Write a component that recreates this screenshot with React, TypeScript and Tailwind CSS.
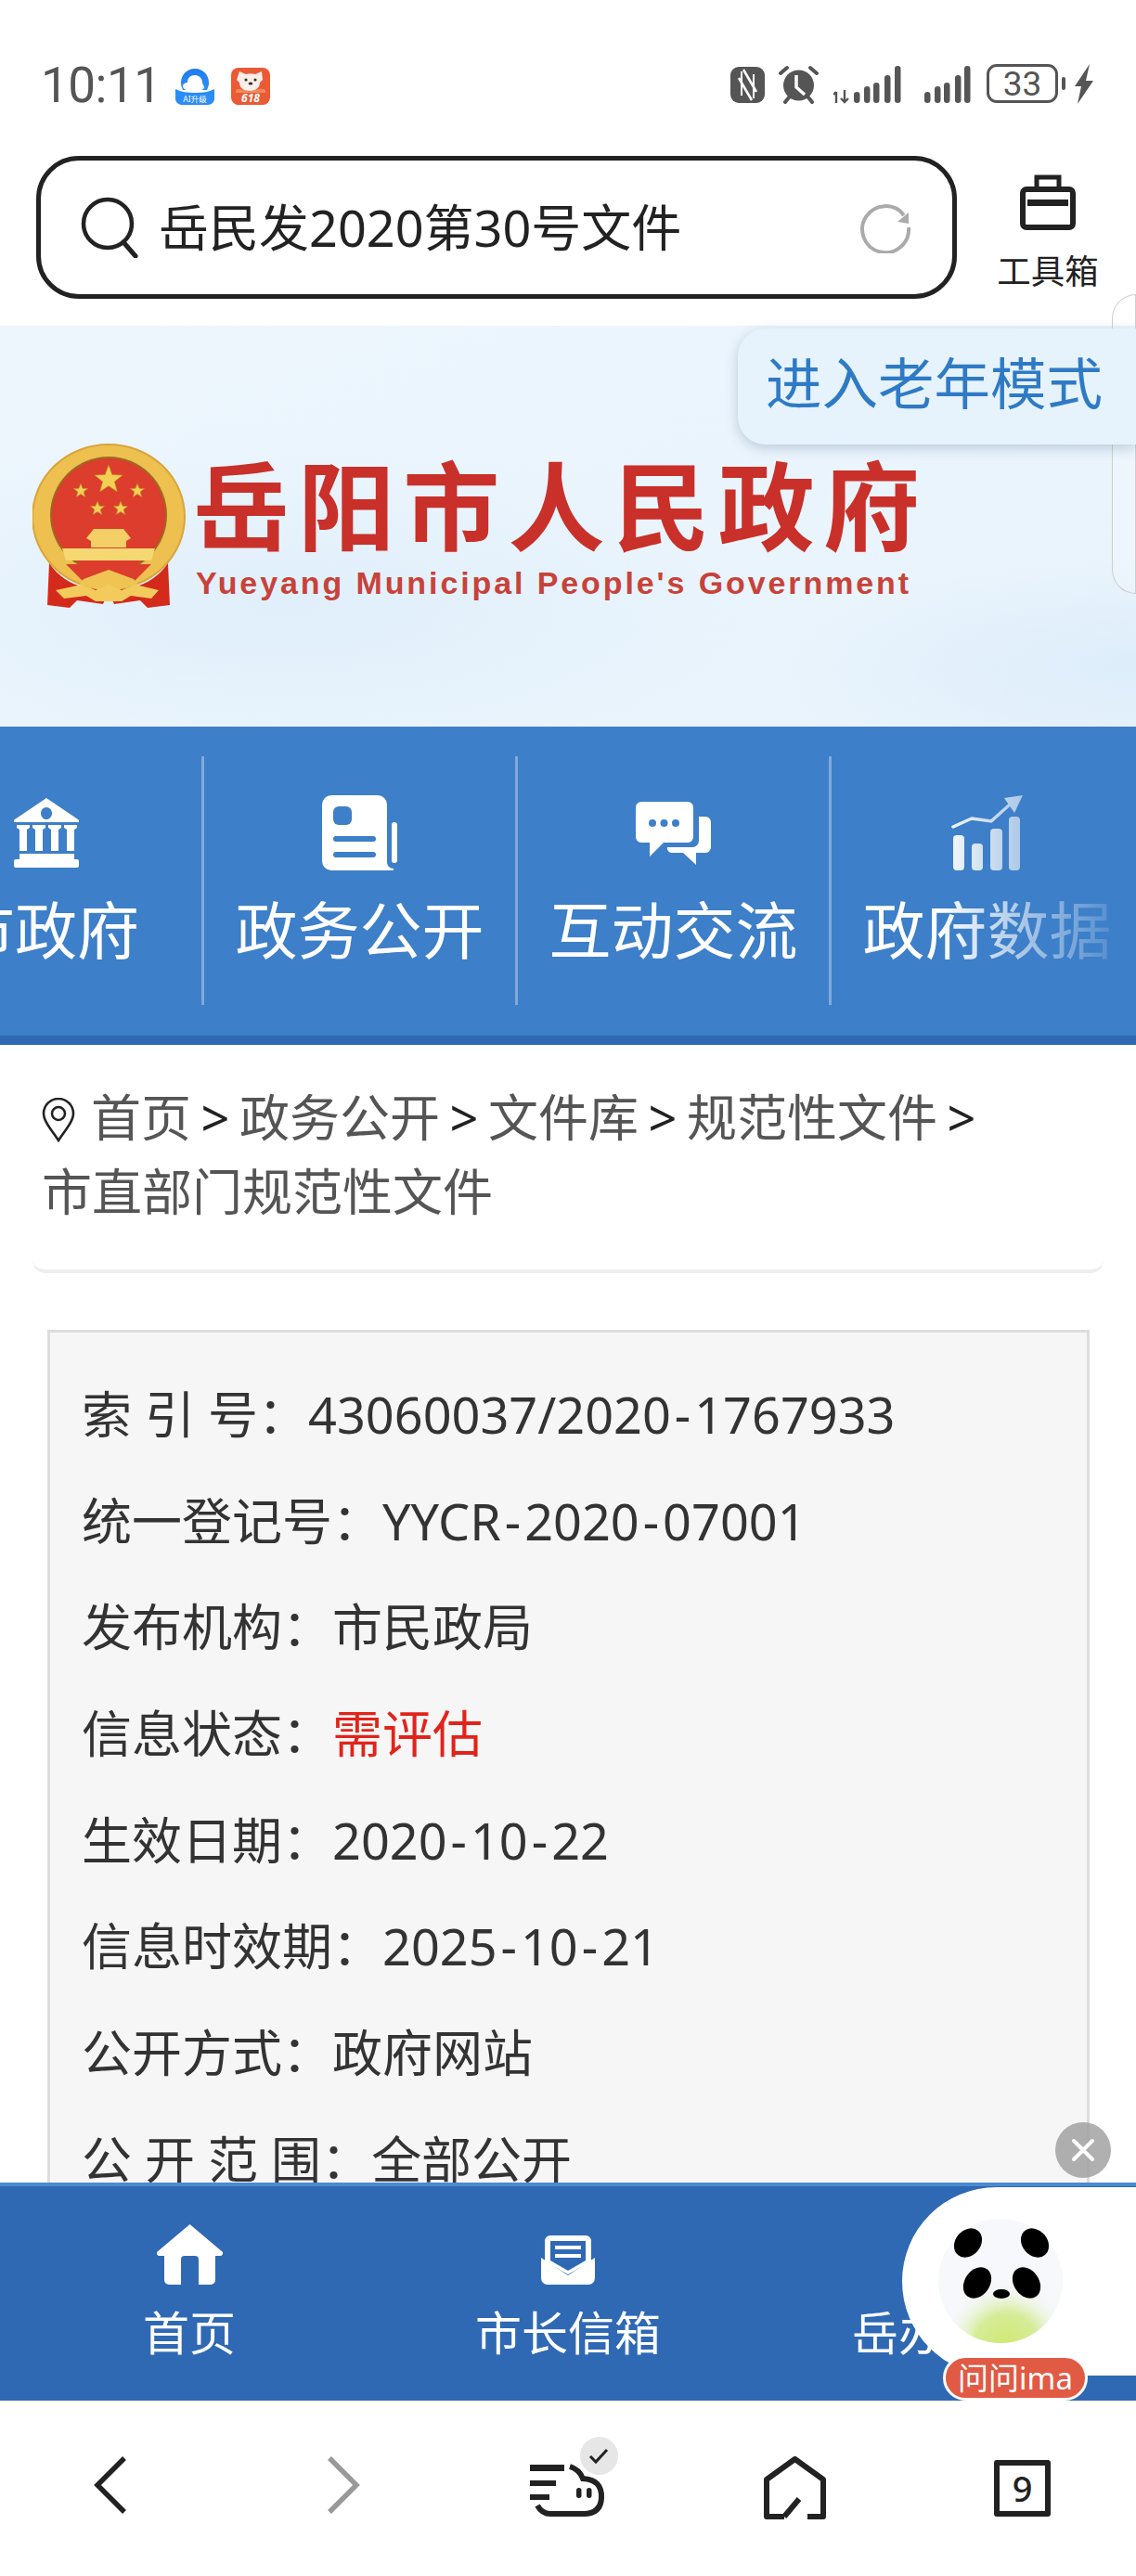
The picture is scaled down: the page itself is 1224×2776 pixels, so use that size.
import type { ReactNode } from "react";

const BLUE = "#3d7fc8";
const BAR = "#2f69b4";

const INFO: { label: string; value: string; red?: boolean }[] = [
  { label: "索 引 号：", value: "43060037/2020-1767933" },
  { label: "统一登记号：", value: "YYCR-2020-07001" },
  { label: "发布机构：", value: "市民政局" },
  { label: "信息状态：", value: "需评估", red: true },
  { label: "生效日期：", value: "2020-10-22" },
  { label: "信息时效期：", value: "2025-10-21" },
  { label: "公开方式：", value: "政府网站" },
  { label: "公 开 范 围：", value: "全部公开" },
];

/* status bar */
const QqIcon = () => (
  <svg width="42" height="40" viewBox="0 0 42 40">
    <defs>
      <linearGradient id="qqb" x1="0" y1="0" x2="0" y2="1">
        <stop offset="0" stopColor="#1f7cf0" />
        <stop offset="1" stopColor="#2f8df5" />
      </linearGradient>
    </defs>
    <path d="M21 1c9 0 15 7 15 15 0 3-1 6-2 8H8c-1-2-2-5-2-8C6 8 12 1 21 1z" fill="url(#qqb)" />
    <path d="M21 8c5 0 8 4 8 8 0 2 2 3 2 5s-2 3-4 3H13c-3 0-5-2-5-4 0-3 3-4 5-4 0-5 3-8 8-8z" fill="#fff" />
    <path d="M0 23c6 3 13 4 21 4s15-1 21-4v10c0 4-3 7-7 7H7c-4 0-7-3-7-7z" fill="#2a8cf4" />
    <text x="21" y="37" textAnchor="middle" fontSize="8.5" fill="#fff">AI升级</text>
  </svg>
);

const JdIcon = () => (
  <svg width="42" height="40" viewBox="0 0 42 40">
    <rect width="42" height="40" rx="8" fill="#ea5a35" />
    <path d="M5 24c5-3 8 2 16 1s11-4 16-1v3H5z" fill="#f08a5d" />
    <path d="M9 4l7 3c3-1 7-1 10 0l7-3 1 9-3 3c0 6-5 9-11 9s-11-3-11-9l-3-3z" fill="#fbeee6" />
    <circle cx="16" cy="13" r="1.6" fill="#333" />
    <circle cx="26" cy="13" r="1.6" fill="#333" />
    <ellipse cx="21" cy="17" rx="2.4" ry="1.6" fill="#333" />
    <text x="21" y="37" textAnchor="middle" fontSize="12" fontStyle="italic" fontWeight="700" fill="#fff">618</text>
  </svg>
);

const NfcIcon = () => (
  <svg width="37" height="39" viewBox="0 0 37 39">
    <rect width="37" height="39" rx="9" fill="#555" />
    <path d="M12 5v26M25 8v26" fill="none" stroke="#fff" strokeWidth="2" />
    <path d="M9 12l14 24M14 3l14 24" fill="none" stroke="#fff" strokeWidth="2.5" />
  </svg>
);

const AlarmIcon = () => (
  <svg width="43" height="42" viewBox="0 0 43 42">
    <circle cx="21.5" cy="22" r="16.5" fill="#555" />
    <path d="M2 9l7-6M41 9l-7-6M7 40l4-5M36 40l-4-5" stroke="#555" strokeWidth="4" strokeLinecap="round" />
    <path d="M19 11v13l9 8" fill="none" stroke="#fff" strokeWidth="3.5" />
  </svg>
);

const SignalIcon = ({ tag }: { tag?: boolean }) => {
  const tops = [29, 23, 19, 11, 1];
  const xs = tag ? [22, 33, 43, 55, 66] : [0, 11, 21, 33, 43];
  return (
    <svg width={tag ? 73 : 50} height="42" viewBox={`0 0 ${tag ? 73 : 50} 42`}>
      {tops.map((t, i) => (
        <rect key={i} x={xs[i]} y={t} width="6.5" height={41 - t} rx="3.2" fill="#555" />
      ))}
      {tag && <path d="M3 29v12M0 32l3-3M12 27v13M8 36l4 4 4-4" fill="none" stroke="#555" strokeWidth="2.4" />}
    </svg>
  );
};

const BoltIcon = () => (
  <svg width="20" height="43" viewBox="0 0 20 43">
    <path d="M16 0L0 24h7L3 43l17-25h-8z" fill="#555" />
  </svg>
);

const StatusBar = () => (
  <div className="h-[170px] shrink-0 flex items-start justify-between pt-[69px] pl-[44px] pr-[46px]">
    <div className="flex items-start">
      <span className="[font-family:Roboto,sans-serif] text-[53px] leading-[46px] text-[#555] tracking-[-0.5px]">10:11</span>
      <div className="ml-[16px] mt-[4px] flex gap-[18px]">
        <QqIcon />
        <JdIcon />
      </div>
    </div>
    <div className="flex items-start">
      <div className="mt-[3px]"><NfcIcon /></div>
      <div className="ml-[15px] mt-[1px]"><AlarmIcon /></div>
      <div className="ml-[16px] mt-[1px]"><SignalIcon tag /></div>
      <div className="ml-[25px] mt-[1px]"><SignalIcon /></div>
      <div className="ml-[17px] w-[77px] h-[42px] rounded-[11px] border-[3px] border-[#555] flex items-center justify-center [font-family:Roboto,sans-serif] text-[37px] leading-none text-[#555]">33</div>
      <div className="ml-[4px] mt-[14px] w-[4px] h-[14px] rounded-full bg-[#555]" />
      <div className="ml-[10px]"><BoltIcon /></div>
    </div>
  </div>
);

/* search row */
const SearchRow = () => (
  <div className="h-[181px] shrink-0 flex items-start">
    <div className="ml-[39px] -mt-[2px] w-[992px] h-[154px] rounded-[46px] border-[5px] border-[#222] flex items-center pl-[42px] pr-[44px]">
      <svg width="64" height="66" viewBox="0 0 64 66" className="shrink-0">
        <circle cx="30" cy="29" r="26" fill="none" stroke="#222" strokeWidth="4.5" />
        <path d="M47 49l13 15" stroke="#222" strokeWidth="5" strokeLinecap="round" />
      </svg>
      <span className="ml-[21px] text-[54px] leading-none text-[#222] flex-1">岳民发2020第30号文件</span>
      <svg width="56" height="56" viewBox="0 0 56 56" className="shrink-0">
        <path d="M48 15A25 25 0 1 0 53 28" fill="none" stroke="#aaa" strokeWidth="4" />
        <path d="M41 22l12 2V12z" fill="#aaa" />
      </svg>
    </div>
    <div className="ml-[38px] mt-[18px] w-[120px] flex flex-col items-center">
      <svg width="60" height="60" viewBox="0 0 60 60">
        <path d="M18 16V3h24v13" fill="none" stroke="#222" strokeWidth="5" />
        <rect x="3" y="16" width="54" height="41" rx="4" fill="none" stroke="#222" strokeWidth="6" />
        <rect x="8" y="27" width="44" height="7" fill="#222" />
      </svg>
      <span className="mt-[26px] text-[36.500px] leading-[36px] text-[#222]">工具箱</span>
    </div>
  </div>
);

/* banner */
const Star = ({ x, y, r }: { x: number; y: number; r: number }) => {
  const pts = Array.from({ length: 10 }, (_, i) => {
    const a = (Math.PI / 5) * i - Math.PI / 2;
    const d = i % 2 ? r * 0.42 : r;
    return `${(x + d * Math.cos(a)).toFixed(1)},${(y + d * Math.sin(a)).toFixed(1)}`;
  });
  return <polygon points={pts.join(" ")} fill="#f3cf55" stroke="#b98a25" strokeWidth="0.6" />;
};

const Emblem = () => (
  <svg width="165" height="177" viewBox="0 0 165 177" className="shrink-0">
    <ellipse cx="82" cy="79" rx="82" ry="78" fill="#eec04f" />
    <ellipse cx="82" cy="79" rx="82" ry="78" fill="none" stroke="#d9a53a" strokeWidth="2" />
    <circle cx="82" cy="77" r="63" fill="#9c6a22" />
    <circle cx="82" cy="77" r="61" fill="#dc3d2c" />
    <Star x={82} y={39} r={16} />
    <Star x={52} y={51} r={8} />
    <Star x={113} y={51} r={8} />
    <Star x={70} y={70} r={8} />
    <Star x={95} y={70} r={8} />
    <path d="M58 102l8-10h32l8 10-5 3v7H63v-7z" fill="#f4cf66" />
    <path d="M32 113h100l-4 13H36z" fill="#f6d873" />
    <path d="M36 130h92l-18 18H54z" fill="#dc3d2c" />
    <path d="M18 129c10 14 22 22 38 26l26 4-6 14-28-4-8 8-24-3z" fill="#d42a1c" />
    <path d="M146 129c-10 14-22 22-38 26l-26 4 6 14 28-4 8 8 24-3z" fill="#d42a1c" />
    <path d="M55 146l27-10 27 10 5 6-32 8-32-8z" fill="#efc452" />
    <path d="M25 158l28-6 15 6 14-6 14 6 15-6 25 6-8 9-22-3-10 6h-28l-10-6-24 3z" fill="#f2cb5c" />
  </svg>
);

const Banner = () => (
  <div className="relative h-[432px] shrink-0 overflow-hidden bg-[radial-gradient(ellipse_at_100%_85%,#ddedfa_0%,#ddedfa00_22%),radial-gradient(ellipse_at_25%_70%,#e0effb_0%,#e0effb00_40%),linear-gradient(160deg,#edf6fd_0%,#e8f3fc_100%)] pt-[127px] pl-[35px]">
    <div className="flex items-start">
      <Emblem />
      <div className="ml-[8px] mt-[16px] w-[783px]">
        <div className="flex justify-between text-[104px] leading-[104px] font-bold text-[#c9302a]">
          {"岳阳市人民政府".split("").map((c) => (
            <span key={c}>{c}</span>
          ))}
        </div>
        <div className="mt-[10px] ml-[3px] [font-family:'Liberation_Sans',sans-serif] font-bold text-[34px] leading-[40px] tracking-[2.900px] whitespace-nowrap text-[#c8423a]">
          Yueyang Municipal People's Government
        </div>
      </div>
    </div>
  </div>
);

const ElderOverlay = () => (
  <>
    <div className="absolute right-0 top-[317px] h-[323px] w-[26px] rounded-l-[34px] border border-[#cfcfcf] bg-white/20" />
    <div className="absolute right-0 top-[354px] w-[429px] h-[125px] rounded-l-[30px] bg-[#e6f3fc] shadow-[0_4px_14px_rgba(80,110,140,0.3)] flex items-center pl-[30px] pb-[6px] text-[60.500px] leading-none text-[#2f7ac5] whitespace-nowrap">
      进入老年模式
    </div>
  </>
);

/* main nav */
const BankIcon = () => (
  <svg width="70" height="75" viewBox="0 0 70 75" fill="#fff">
    <path fillRule="evenodd" d="M35 0L69 23a2 2 0 0 1 1 2v1H0v-1a2 2 0 0 1 1-2zM35 10a6 6.500 0 1 0 .01 0z" />
    {[3, 20, 37, 54].map((x) => (
      <path key={x} d={`M${x} 29h14v3l-3 2v23h-8V34l-3-2z`} />
    ))}
    <rect x="6" y="60" width="59" height="7" />
    <rect x="0" y="66" width="70" height="9" rx="2" />
  </svg>
);

const DocIcon = () => (
  <svg width="82" height="81" viewBox="0 0 82 81">
    <path d="M10 0h50a10 10 0 0 1 10 10v62c0 4 3 7 7 7v2H10A10 10 0 0 1 0 71V10A10 10 0 0 1 10 0z" fill="#fff" />
    <rect x="12" y="12" width="20" height="20" rx="6" fill={BLUE} />
    <rect x="12" y="44" width="46" height="6" rx="3" fill={BLUE} />
    <rect x="12" y="61" width="46" height="6" rx="3" fill={BLUE} />
    <rect x="75" y="29" width="6" height="44" rx="3" fill="#fff" />
  </svg>
);

const ChatIcon = () => (
  <svg width="81" height="68" viewBox="0 0 81 68">
    <path d="M6 0h50a6 6 0 0 1 6 6v32a6 6 0 0 1-6 6H30L15 59V44H6a6 6 0 0 1-6-6V6a6 6 0 0 1 6-6z" fill="#fff" />
    <circle cx="18" cy="23" r="4" fill={BLUE} />
    <circle cx="30.500" cy="23" r="4" fill={BLUE} />
    <circle cx="43" cy="23" r="4" fill={BLUE} />
    <path d="M68 16h7a6 6 0 0 1 6 6v27a6 6 0 0 1-6 6H65v13L51 55H38a5 5 0 0 1-4-6h27a7 7 0 0 0 7-7z" fill="#fff" />
  </svg>
);

const ChartIcon = () => (
  <svg width="77" height="81" viewBox="0 0 77 81" fill="#fff">
    <rect x="2" y="43" width="12" height="38" rx="4" />
    <rect x="22" y="52" width="12" height="29" rx="4" />
    <rect x="42" y="36" width="13" height="45" rx="4" />
    <rect x="62" y="23" width="12" height="58" rx="4" />
    <path d="M2 34l20-9 21 3 20-18" fill="none" stroke="#fff" strokeWidth="3.5" strokeLinecap="round" />
    <path d="M77 0L57 3l11 16z" />
  </svg>
);

const NAV: { label: string; icon: ReactNode }[] = [
  { label: "市政府", icon: <BankIcon /> },
  { label: "政务公开", icon: <DocIcon /> },
  { label: "互动交流", icon: <ChatIcon /> },
  { label: "政府数据", icon: <ChartIcon /> },
];

const MainNav = () => (
  <div className="relative h-[343px] shrink-0 overflow-hidden bg-[#3d7fc8] border-b-[10px] border-[#2f69b4]">
    <div className="flex -ml-[118px] pt-[32px]">
      {NAV.map((n, i) => (
        <div
          key={n.label}
          className={`w-[338px] h-[268px] shrink-0 flex flex-col items-center pt-[42px] border-r-[3px] ${i < 3 ? "border-[#83a9d8]" : "border-transparent"}`}
        >
          <div className="h-[81px] flex items-center">{n.icon}</div>
          <span className="mt-[28px] text-[67px] leading-[72px] text-white whitespace-nowrap">{n.label}</span>
        </div>
      ))}
    </div>
    <div className="absolute right-0 top-0 bottom-0 w-[215px] bg-gradient-to-r from-[#3d7fc800] to-[#3d7fc8]" />
  </div>
);

/* breadcrumb + info card */
const Sep = () => <span className="inline-block w-[52px] text-center text-[#222]">&gt;</span>;

const Breadcrumb = () => (
  <div className="mx-[35px] pt-[38px] pb-[44px] pl-[10px] pr-[100px] border-b-[4px] border-[#eeeeee] rounded-b-[14px] text-[54px] leading-[80px] text-[#555]">
    <svg width="36" height="48" viewBox="0 0 36 48" className="inline-block mr-[17px] align-[-6px]">
      <path d="M18 46C10 34 2 25 2 17a16 16 0 0 1 32 0c0 8-8 17-16 29z" fill="none" stroke="#222" strokeWidth="2.6" />
      <circle cx="18" cy="17" r="7" fill="none" stroke="#222" strokeWidth="2.6" />
    </svg>
    首页<Sep />政务公开<Sep />文件库<Sep />规范性文件<Sep />市直部门规范性文件
  </div>
);

// the source font has wider hyphens than Noto Sans
const Value = ({ text }: { text: string }) => (
  <>
    {text.split("-").map((part, i) => (
      <span key={i}>
        {i > 0 && <span className="px-[4px]">-</span>}
        {part}
      </span>
    ))}
  </>
);

const InfoCard = () => (
  <div className="ml-[51px] mt-[61px] w-[1123px] bg-[#f6f6f6] border-[3px] border-[#dddddd] pl-[34px] pt-[31px] pb-[40px]">
    {INFO.map((r) => (
      <div key={r.label} className="h-[114.7px] flex items-center text-[54px] text-[#333] whitespace-pre">
        <span>{r.label}</span>
        <span className={r.red ? "text-[#e2231a]" : ""}>
          <Value text={r.value} />
        </span>
      </div>
    ))}
  </div>
);

/* site bottom bar */
const HomeIcon = () => (
  <svg width="71" height="65" viewBox="0 0 71 65" fill="#fff">
    <path d="M35.500 0L71 30a3 3 0 0 1-3 4h-5v26a5 5 0 0 1-5 5H45V38a4 4 0 0 0-4-4H30a4 4 0 0 0-4 4v27H13a5 5 0 0 1-5-5V34H3a3 3 0 0 1-3-4z" />
  </svg>
);

const MailIcon = () => (
  <svg width="58" height="53" viewBox="0 0 58 53">
    <path d="M10 0h38a6 6 0 0 1 6 6v22L29 42 4 28V6a6 6 0 0 1 6-6z" fill="#fff" />
    <path d="M10 6h38v21L29 38 10 27z" fill={BAR} />
    <rect x="15" y="11" width="28" height="4" fill="#fff" />
    <rect x="15" y="20" width="28" height="4" fill="#fff" />
    <path d="M0 24l29 19 29-19v22a7 7 0 0 1-7 7H7a7 7 0 0 1-7-7z" fill="#fff" />
  </svg>
);

const SiteBar = () => (
  <div className="h-[235px] shrink-0 bg-[#2f69b4] border-t-[4px] border-[#4a8ad0] grid grid-cols-3">
    <div className="flex flex-col items-center pt-[41px]">
      <div className="h-[65px] flex items-end"><HomeIcon /></div>
      <span className="mt-[23px] text-[50px] leading-[58px] text-white">首页</span>
    </div>
    <div className="flex flex-col items-center pt-[41px]">
      <div className="h-[65px] flex items-end"><MailIcon /></div>
      <span className="mt-[23px] text-[50px] leading-[58px] text-white">市长信箱</span>
    </div>
    <div className="flex flex-col items-center pt-[41px]">
      <div className="h-[65px]" />
      <span className="mt-[23px] w-[204px] text-[50px] leading-[58px] text-white">岳办</span>
    </div>
  </div>
);

const PandaBubble = () => (
  <>
    <div className="absolute right-0 top-[2357px] w-[252px] h-[203px] rounded-l-[102px] bg-white flex items-center pl-[39px]">
      <svg width="134" height="134" viewBox="0 0 134 134" className="-mt-[1px]">
        <defs>
          <radialGradient id="pandaGreen" cx="0.55" cy="1.02" r="0.52">
            <stop offset="0" stopColor="#d2e872" />
            <stop offset="0.5" stopColor="#d5ec98" />
            <stop offset="1" stopColor="#f6f7fb" stopOpacity="0" />
          </radialGradient>
        </defs>
        <circle cx="67" cy="67" r="67" fill="#f7f8fb" />
        <circle cx="67" cy="67" r="67" fill="url(#pandaGreen)" />
        <ellipse cx="32" cy="26" rx="17" ry="13.5" transform="rotate(-50 32 26)" />
        <ellipse cx="104" cy="26" rx="17" ry="13.5" transform="rotate(50 104 26)" />
        <ellipse cx="42" cy="69" rx="18" ry="13.5" transform="rotate(-55 42 69)" />
        <ellipse cx="95" cy="69" rx="18" ry="13.5" transform="rotate(55 95 69)" />
        <ellipse cx="68" cy="81" rx="9" ry="5" />
      </svg>
    </div>
    <div className="absolute left-[1016px] top-[2538px] w-[156px] h-[49px] rounded-full bg-[#e05a44] border-[3px] border-white flex items-center justify-center text-[33px] leading-none text-white whitespace-nowrap">
      问问ima
    </div>
    <div className="absolute left-[1137px] top-[2287px] w-[60px] h-[60px] rounded-full bg-[#9c9c9c]/80 flex items-center justify-center">
      <svg width="26" height="26" viewBox="0 0 26 26">
        <path d="M3 3l20 20M23 3L3 23" stroke="#fff" strokeWidth="4" strokeLinecap="round" />
      </svg>
    </div>
  </>
);

/* browser toolbar */
const BrowserBar = () => (
  <div className="h-[189px] shrink-0 bg-white grid grid-cols-5 place-items-center pb-[7px]">
    <svg width="36" height="62" viewBox="0 0 36 62" className="-ml-[6px]">
      <path d="M33 2L4 31l29 29" fill="none" stroke="#222" strokeWidth="5.5" />
    </svg>
    <svg width="36" height="62" viewBox="0 0 36 62" className="ml-[6px]">
      <path d="M3 2l29 29L3 60" fill="none" stroke="#999" strokeWidth="5.5" />
    </svg>
    <div className="relative w-[82px] h-[58px] mt-[12px]">
      <svg width="82" height="58" viewBox="0 0 82 58">
        <rect y="1" width="37" height="7" fill="#222" />
        <rect y="18" width="28" height="6" fill="#222" />
        <rect y="33" width="21" height="6" fill="#222" />
        <path d="M43 3Q53 6 57 16Q78 17 77 37Q76 54 58 54H22Q13 54 8 45" fill="none" stroke="#222" strokeWidth="6" />
        <rect x="50" y="26" width="5.5" height="11" rx="2.7" fill="#222" />
        <rect x="61" y="26" width="5.5" height="11" rx="2.7" fill="#222" />
      </svg>
      <div className="absolute left-[54px] -top-[29px] w-[41px] h-[41px] rounded-full bg-[#e6e6e6] flex items-center justify-center">
        <svg width="22" height="18" viewBox="0 0 22 18">
          <path d="M2 9l6 6L20 2" fill="none" stroke="#222" strokeWidth="3" />
        </svg>
      </div>
    </div>
    <svg width="67" height="69" viewBox="0 0 67 69" className="mt-[6px]">
      <path d="M22 65H3V25L33.500 3L64 25V65H47M22 65L38 46" fill="none" stroke="#222" strokeWidth="6" strokeLinejoin="round" />
    </svg>
    <div className="mt-[6px] w-[61px] h-[61px] rounded-[3px] border-[6px] border-[#222] flex items-center justify-center text-[38px] leading-none text-[#222] font-medium">
      9
    </div>
  </div>
);

export default function App() {
  return (
    <div className="relative w-[1224px] h-[2776px] overflow-hidden bg-white flex flex-col [font-family:'Noto_Sans','Noto_Sans_CJK_SC',sans-serif]">
      <StatusBar />
      <SearchRow />
      <Banner />
      <MainNav />
      <main className="flex-1 min-h-0 overflow-hidden">
        <Breadcrumb />
        <InfoCard />
      </main>
      <SiteBar />
      <BrowserBar />
      <ElderOverlay />
      <PandaBubble />
    </div>
  );
}
